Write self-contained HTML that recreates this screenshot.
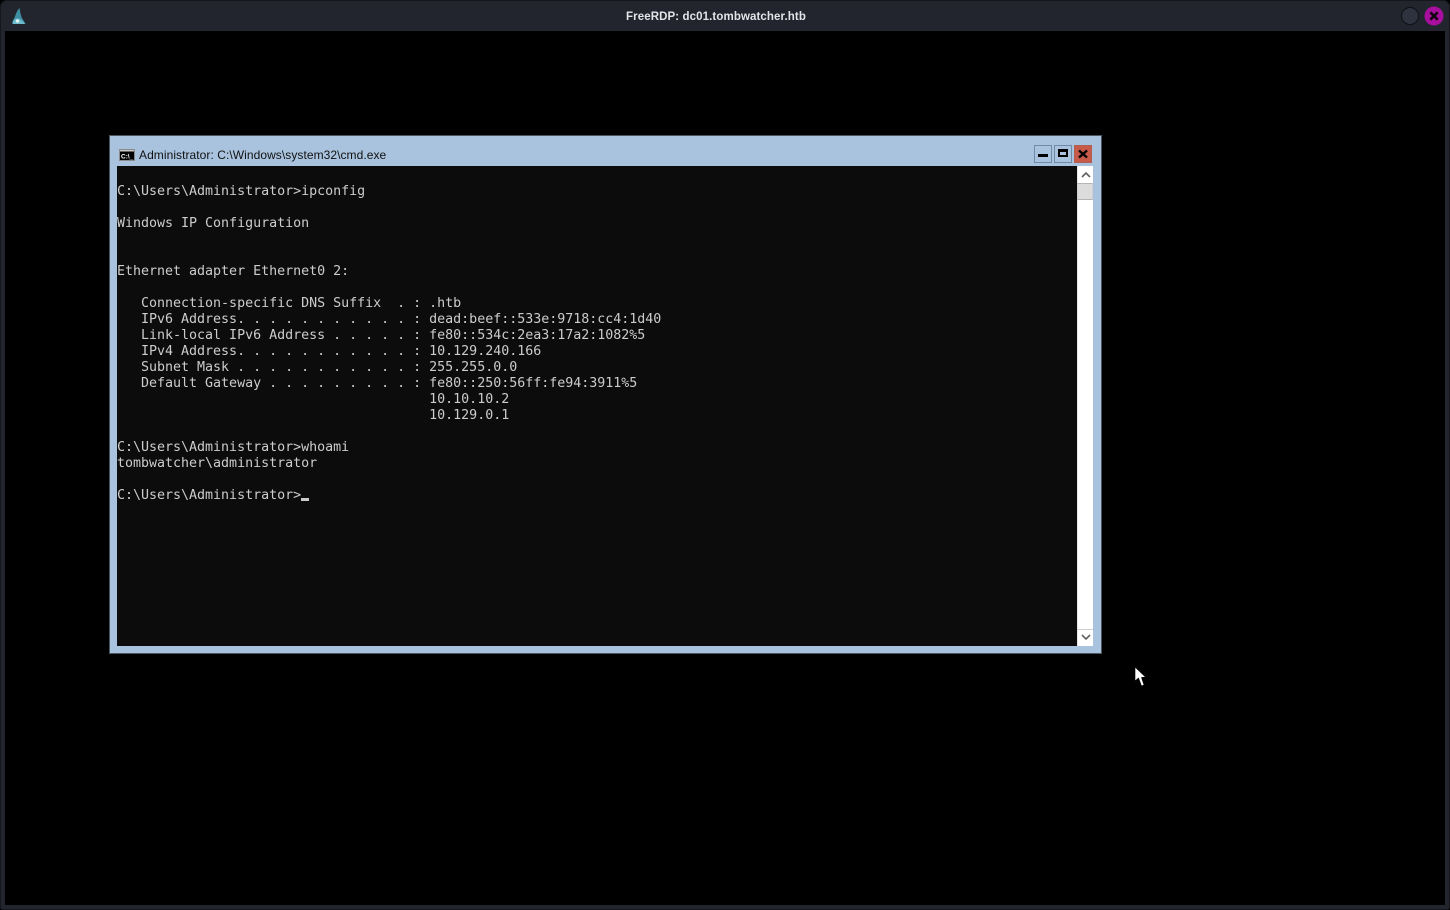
<!DOCTYPE html>
<html><head><meta charset="utf-8"><title>FreeRDP</title>
<style>
html,body{margin:0;padding:0;width:1450px;height:910px;overflow:hidden;background:#000}
div,pre,svg{position:absolute;box-sizing:border-box}
#frame{left:0;top:0;width:1450px;height:910px;background:#22252e;border-radius:7px 7px 3px 3px;box-shadow:inset 0 0 0 1px #15171c}
#inner{left:5px;top:31px;width:1440px;height:874px;background:#000}
#ttl{left:0;top:9px;width:1432px;text-align:center;color:#e2e4e8;font:bold 11.5px/15px "Liberation Sans",sans-serif;letter-spacing:.1px;padding-top:1px}
#win{left:110px;top:136px;width:991px;height:517px;background:#a9c3de;box-shadow:0 0 0 1px #4a5560}
#wt{left:29px;top:12px;color:#111;font:12px/15px "Liberation Sans",sans-serif;white-space:nowrap;letter-spacing:.06px}
#con{left:7px;top:30px;width:960px;height:480px;background:#0c0c0c}
#con pre{left:0;top:2px;margin:0;color:#cccccc;font:13.33px/16px "DejaVu Sans Mono","Liberation Mono",monospace;letter-spacing:-.02px}
#cur{left:184px;top:332px;width:8px;height:3px;background:#ccc}
#sb{left:967px;top:30px;width:16px;height:480px;background:#fff;border-left:1px solid #e5e5e5}
.b{width:18px;height:18px;top:9px;border:1px solid #6f89a6}
</style></head><body>
<div id="frame"></div>
<div id="inner"></div>
<div id="ttl">FreeRDP: dc01.tombwatcher.htb</div>
<svg style="left:11px;top:7px" width="16" height="18" viewBox="0 0 16 18"><path d="M1.5 17 C1 14 3 12 4 9.5 C5 6 6.5 3 8.5 1 C9 4 9.5 7 10.5 10 C11.5 12.5 13.5 14.5 14.5 17 Z" fill="#3f8ea3"/><path d="M1.5 17 C1.5 14 3.5 12 6 11.5 C9 11.5 12 14 14 17 Z" fill="#6dbccb"/><circle cx="6.5" cy="14" r="1.7" fill="#e3f0f3"/></svg>
<svg style="left:1400px;top:6px" width="20" height="20"><circle cx="10" cy="10" r="8.5" fill="#2e323e" stroke="#0e0f13" stroke-width="1"/></svg>
<svg style="left:1424px;top:6px" width="20" height="20"><circle cx="10" cy="10" r="9.5" fill="#a80f9f"/><path d="M6.3 6.3 L13.7 13.7 M13.7 6.3 L6.3 13.7" stroke="#12040f" stroke-width="2.6"/></svg>

<div id="win">
  <svg style="left:9px;top:13px" width="16" height="12" viewBox="0 0 16 12"><rect x=".5" y=".5" width="15" height="11" fill="#000" stroke="#8a8a8a"/><rect x="1" y="1" width="14" height="1.5" fill="#c8c8c8"/><text x="2" y="9.5" font-family="Liberation Sans,sans-serif" font-weight="bold" font-size="6.5" fill="#fff">C:\_</text></svg>
  <div id="wt">Administrator: C:\Windows\system32\cmd.exe</div>
  <div class="b" style="left:924px"></div>
  <div style="left:928px;top:18px;width:10px;height:3px;background:#000"></div>
  <div class="b" style="left:944px"></div>
  <div style="left:948px;top:13px;width:10px;height:8px;border:2px solid #000;border-top-width:3px"></div>
  <div class="b" style="left:964px;background:#c75a48;border-color:#b06050"></div>
  <svg style="left:967px;top:12px" width="12" height="12"><path d="M2 2.5 L10 9.5 M10 2.5 L2 9.5" stroke="#000" stroke-width="2.4"/></svg>
  <div id="con">
<pre>

C:\Users\Administrator&gt;ipconfig

Windows IP Configuration


Ethernet adapter Ethernet0 2:

   Connection-specific DNS Suffix  . : .htb
   IPv6 Address. . . . . . . . . . . : dead:beef::533e:9718:cc4:1d40
   Link-local IPv6 Address . . . . . : fe80::534c:2ea3:17a2:1082%5
   IPv4 Address. . . . . . . . . . . : 10.129.240.166
   Subnet Mask . . . . . . . . . . . : 255.255.0.0
   Default Gateway . . . . . . . . . : fe80::250:56ff:fe94:3911%5
                                       10.10.10.2
                                       10.129.0.1

C:\Users\Administrator&gt;whoami
tombwatcher\administrator

C:\Users\Administrator&gt;</pre>
    <div id="cur"></div>
  </div>
  <div id="sb">
    <svg style="left:2px;top:4px" width="12" height="9"><path d="M2 7 L6 3 L10 7" fill="none" stroke="#606060" stroke-width="1.6"/></svg>
    <div style="left:-1px;top:17px;width:16px;height:17px;background:#dcdcdc;border:1px solid #b5b5b5;border-left-color:#cfcfcf;border-right-color:#cfcfcf"></div>
    <div style="left:-1px;top:463px;width:16px;height:1px;background:#cfcfcf"></div>
    <svg style="left:2px;top:467px" width="12" height="9"><path d="M2 2 L6 6 L10 2" fill="none" stroke="#606060" stroke-width="1.6"/></svg>
  </div>
</div>
<svg style="left:1134px;top:666px" width="13" height="21" viewBox="0 0 13 21"><path d="M1 1 V15 L4.5 12 L7.5 20 L10 19 L7.5 11.5 L11.5 11 Z" fill="#fff" stroke="#000" stroke-width=".6"/></svg>
</body></html>
